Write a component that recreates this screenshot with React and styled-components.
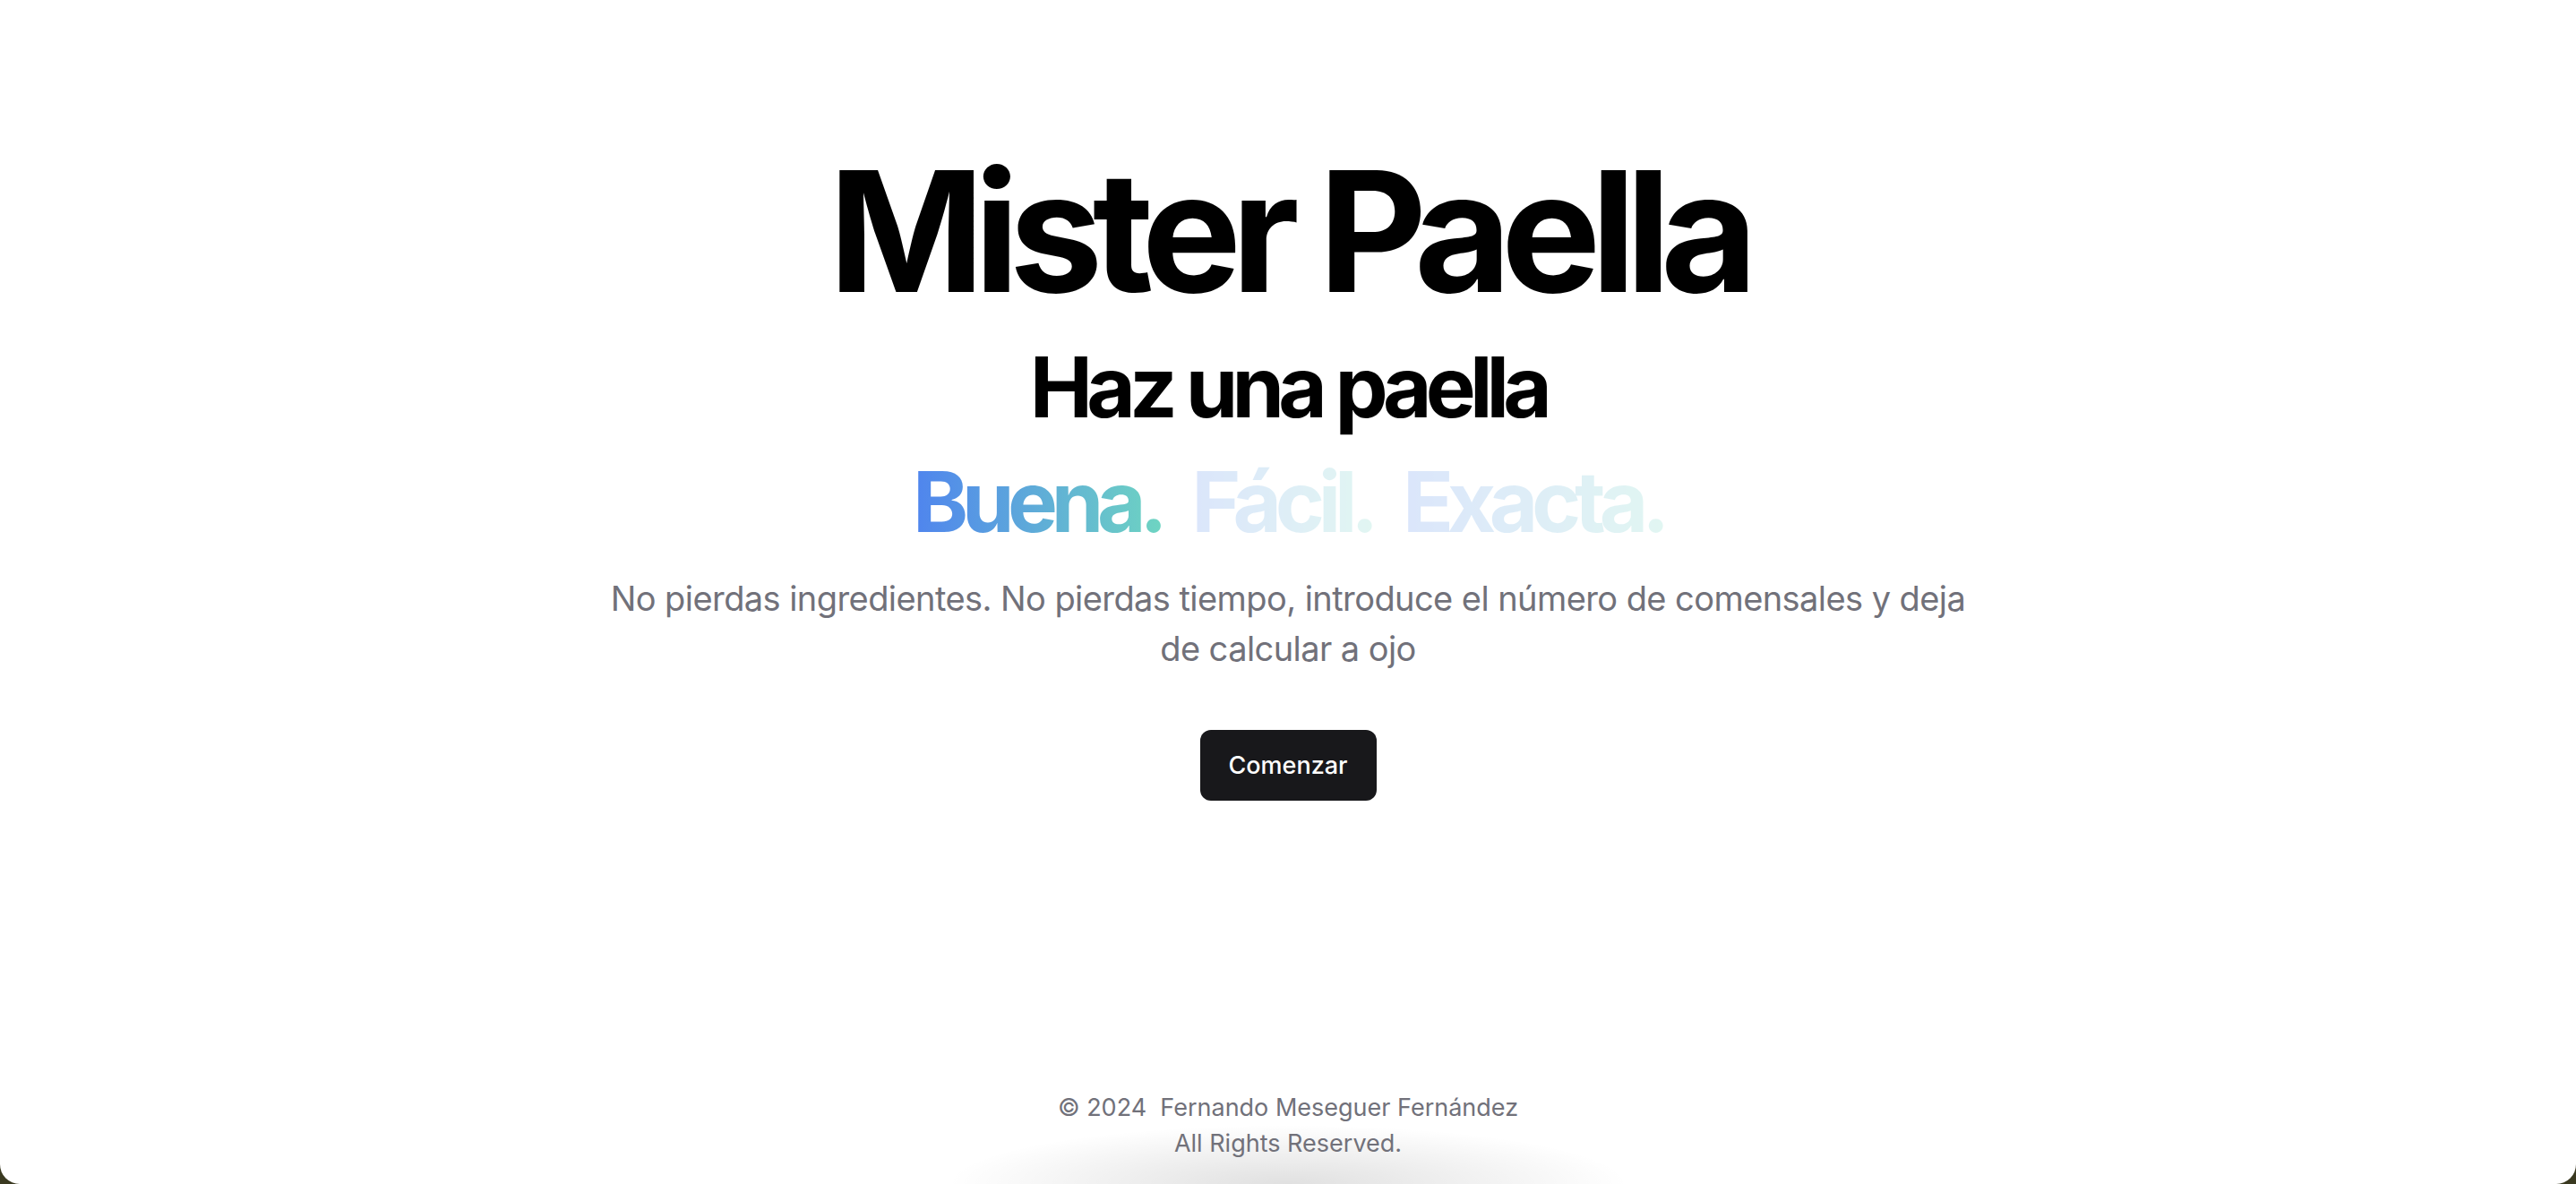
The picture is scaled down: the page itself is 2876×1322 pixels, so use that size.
import React from 'react';
import styled, { createGlobalStyle } from 'styled-components';

const GlobalStyle = createGlobalStyle`
  html, body {
    margin: 0;
    padding: 0;
    background: #3a3920;
  }
  body {
    font-family: Inter, "Noto Sans", "Liberation Sans", sans-serif;
    -webkit-font-smoothing: antialiased;
  }
`;

const Page = styled.div`
  min-height: 1322px;
  display: flex;
  flex-direction: column;
  background: #ffffff;
  border-radius: 0 0 22px 22px;
  overflow: hidden;
`;

const Hero = styled.main`
  flex: 1;
  display: flex;
  flex-direction: column;
  align-items: center;
  padding-top: 165px;
  text-align: center;
`;

const Title = styled.h1`
  margin: 0;
  font-size: 187px;
  line-height: 1;
  font-weight: 700;
  letter-spacing: -0.062em;
  color: #000;
`;

const Subtitle = styled.h2`
  margin: 33px 0 0;
  font-size: 94px;
  line-height: 1;
  font-weight: 700;
  letter-spacing: -0.072em;
  color: #000;
`;

const Words = styled.div`
  margin-top: 34px;
  display: flex;
  gap: 34px;
  font-size: 94px;
  line-height: 1;
  font-weight: 700;
  letter-spacing: -0.078em;
`;

const Word = styled.span`
  background: linear-gradient(to right, #4f84ee, #6ed4c2);
  -webkit-background-clip: text;
  background-clip: text;
  color: transparent;
  opacity: ${p => (p.$active ? 1 : 0.2)};
`;

const Lead = styled.p`
  margin: 33px 0 0;
  max-width: 1536px;
  font-size: 38px;
  line-height: 56px;
  font-weight: 400;
  letter-spacing: -0.015em;
  color: #71717a;
`;

const Button = styled.button`
  margin-top: 63px;
  width: 197px;
  height: 79px;
  border: none;
  border-radius: 12px;
  background: #18181b;
  color: #ffffff;
  font-family: inherit;
  font-size: 27px;
  font-weight: 500;
  cursor: pointer;
`;

const Footer = styled.footer`
  padding: 0 0 25px;
  text-align: center;
  font-size: 27px;
  line-height: 40px;
  color: #71717a;
  background: radial-gradient(ellipse 380px 66px at 50% 100%, rgba(0, 0, 0, 0.12), rgba(0, 0, 0, 0) 100%);
`;

export default function App() {
  return (
    <>
      <GlobalStyle />
      <Page>
        <Hero>
          <Title>Mister Paella</Title>
          <Subtitle>Haz una paella</Subtitle>
          <Words>
            <Word $active>Buena.</Word>
            <Word>Fácil.</Word>
            <Word>Exacta.</Word>
          </Words>
          <Lead>
            No pierdas ingredientes. No pierdas tiempo, introduce el número de comensales y deja de calcular a ojo
          </Lead>
          <Button>Comenzar</Button>
        </Hero>
        <Footer>
          <div>©&nbsp;2024&nbsp;&nbsp;Fernando Meseguer Fernández</div>
          <div>All Rights Reserved.</div>
        </Footer>
      </Page>
    </>
  );
}
